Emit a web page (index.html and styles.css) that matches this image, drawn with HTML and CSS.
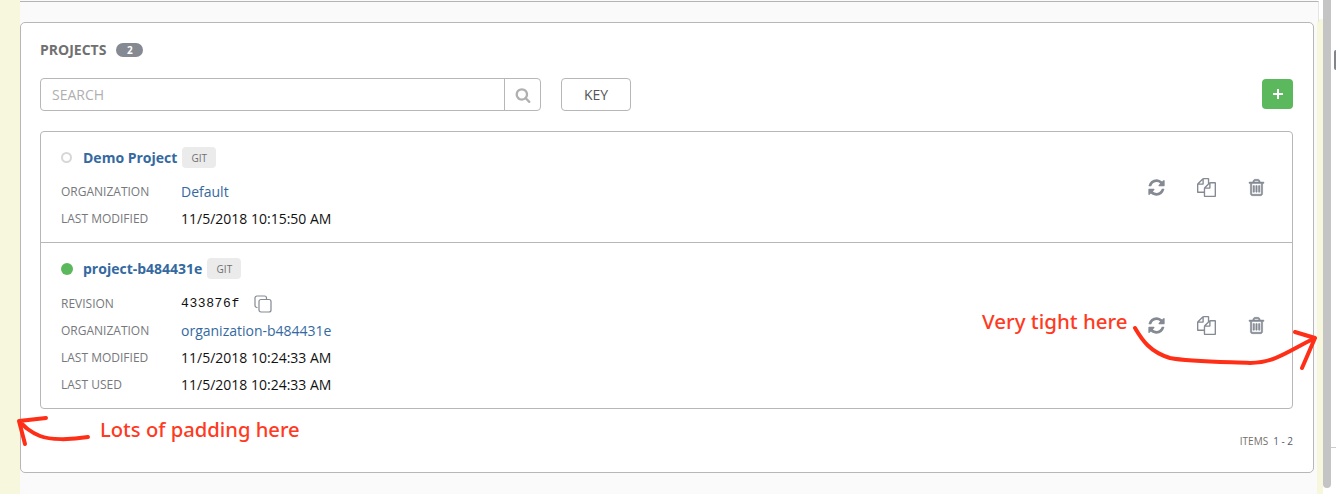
FILE: index.html
```html
<!DOCTYPE html>
<html lang="en">
<head>
<meta charset="utf-8">
<title>Projects</title>
<link rel="stylesheet" href="styles.css">
</head>
<body>
<div class="page">
  <div class="gutter"></div>
  <main class="main">
    <div class="topbar"></div>
    <section class="card">
      <header class="card-head">
        <h2 class="card-title">PROJECTS</h2>
        <span class="count">2</span>
      </header>
      <div class="toolbar">
        <div class="search">
          <span class="search-input">SEARCH</span>
          <span class="search-btn">
            <svg class="search-icon" viewBox="0 0 1792 1792"><path d="M1216 832q0-185-131.500-316.500t-316.500-131.500-316.500 131.500-131.500 316.500 131.500 316.500 316.500 131.500 316.500-131.500 131.500-316.500zm512 832q0 52-38 90t-90 38q-54 0-90-38l-343-342q-179 124-399 124-143 0-273.500-55.500t-225-150-150-225-55.500-273.500 55.500-273.500 150-225 225-150 273.500-55.500 273.500 55.500 225 150 150 225 55.500 273.500q0 220-124 399l343 343q37 37 37 90z"/></svg>
          </span>
        </div>
        <button class="key-btn">KEY</button>
        <button class="add-btn">
          <svg class="add-icon" viewBox="0 0 10 10"><path d="M4 0h2v4h4v2H6v4H4V6H0V4h4z"/></svg>
        </button>
      </div>
      <div class="list">
        <article class="row">
          <div class="row-main">
            <div class="row-title">
              <span class="dot dot-idle"></span>
              <a class="name">Demo Project</a>
              <span class="tag">GIT</span>
            </div>
            <dl class="meta">
              <div class="meta-line"><dt>ORGANIZATION</dt><dd><a class="link">Default</a></dd></div>
              <div class="meta-line"><dt>LAST MODIFIED</dt><dd>11/5/2018 10:15:50 AM</dd></div>
            </dl>
          </div>
          <div class="actions">
            <svg class="act act-sync" viewBox="0 0 1792 1792"><path d="M1639 1056q0 5-1 7-64 268-268 434.500t-478 166.500q-146 0-282.500-55t-243.500-157l-129 129q-19 19-45 19t-45-19-19-45v-448q0-26 19-45t45-19h448q26 0 45 19t19 45-19 45l-137 137q71 66 161 102t187 36q134 0 250-65t186-179q11-17 53-117 8-23 30-23h192q13 0 22.500 9.500t9.500 22.500zm25-800v448q0 26-19 45t-45 19h-448q-26 0-45-19t-19-45 19-45l138-138q-148-137-349-137-134 0-250 65t-186 179q-11 17-53 117-8 23-30 23h-199q-13 0-22.500-9.500t-9.500-22.500v-7q65-268 270-434.500t480-166.500q146 0 284 55.500t245 156.500l130-129q19-19 45-19t45 19 19 45z"/></svg>
            <svg class="act act-files" viewBox="0 0 1792 1792"><path d="M1696 384q40 0 68 28t28 68v1216q0 40-28 68t-68 28h-960q-40 0-68-28t-28-68v-288h-544q-40 0-68-28t-28-68v-672q0-40 20-88t48-76l408-408q28-28 76-48t88-20h416q40 0 68 28t28 68v328q68-40 128-40h416zm-544 213l-299 299h299v-299zm-640-384l-299 299h299v-299zm196 647l316-316v-416h-384v416q0 40-28 68t-68 28h-416v640h512v-256q0-40 20-88t48-76zm956 804v-1152h-384v416q0 40-28 68t-68 28h-416v640h896z"/></svg>
            <svg class="act act-trash" viewBox="0 0 1792 1792"><path d="M704 736v576q0 14-9 23t-23 9h-64q-14 0-23-9t-9-23v-576q0-14 9-23t23-9h64q14 0 23 9t9 23zm256 0v576q0 14-9 23t-23 9h-64q-14 0-23-9t-9-23v-576q0-14 9-23t23-9h64q14 0 23 9t9 23zm256 0v576q0 14-9 23t-23 9h-64q-14 0-23-9t-9-23v-576q0-14 9-23t23-9h64q14 0 23 9t9 23zm128 724v-948h-896v948q0 22 7 40.500t14.500 27 10.500 8.500h832q3 0 10.500-8.500t14.500-27 7-40.500zm-672-1076h448l-48-117q-7-9-17-11h-317q-10 2-17 11zm928 32v64q0 14-9 23t-23 9h-96v948q0 83-47 143.500t-113 60.500h-832q-66 0-113-58.500t-47-141.500v-952h-96q-14 0-23-9t-9-23v-64q0-14 9-23t23-9h309l70-167q15-37 54-63t79-26h320q40 0 79 26t54 63l70 167h309q14 0 23 9t9 23z"/></svg>
          </div>
        </article>
        <article class="row">
          <div class="row-main">
            <div class="row-title">
              <span class="dot dot-ok"></span>
              <a class="name">project-b484431e</a>
              <span class="tag">GIT</span>
            </div>
            <dl class="meta">
              <div class="meta-line"><dt>REVISION</dt><dd class="rev"><span class="hash">433876f</span>
                <svg class="copy" viewBox="0 0 18 18"><path d="M3.500 12.500h-.5a2 2 0 0 1-2-2V3a2 2 0 0 1 2-2h7.500a2 2 0 0 1 2 2v1"/><rect x="5" y="4.500" width="12" height="12.500" rx="2"/></svg>
              </dd></div>
              <div class="meta-line"><dt>ORGANIZATION</dt><dd><a class="link">organization-b484431e</a></dd></div>
              <div class="meta-line"><dt>LAST MODIFIED</dt><dd>11/5/2018 10:24:33 AM</dd></div>
              <div class="meta-line"><dt>LAST USED</dt><dd>11/5/2018 10:24:33 AM</dd></div>
            </dl>
          </div>
          <div class="actions">
            <svg class="act act-sync" viewBox="0 0 1792 1792"><path d="M1639 1056q0 5-1 7-64 268-268 434.500t-478 166.500q-146 0-282.500-55t-243.500-157l-129 129q-19 19-45 19t-45-19-19-45v-448q0-26 19-45t45-19h448q26 0 45 19t19 45-19 45l-137 137q71 66 161 102t187 36q134 0 250-65t186-179q11-17 53-117 8-23 30-23h192q13 0 22.500 9.500t9.500 22.500zm25-800v448q0 26-19 45t-45 19h-448q-26 0-45-19t-19-45 19-45l138-138q-148-137-349-137-134 0-250 65t-186 179q-11 17-53 117-8 23-30 23h-199q-13 0-22.500-9.500t-9.500-22.500v-7q65-268 270-434.500t480-166.500q146 0 284 55.500t245 156.500l130-129q19-19 45-19t45 19 19 45z"/></svg>
            <svg class="act act-files" viewBox="0 0 1792 1792"><path d="M1696 384q40 0 68 28t28 68v1216q0 40-28 68t-68 28h-960q-40 0-68-28t-28-68v-288h-544q-40 0-68-28t-28-68v-672q0-40 20-88t48-76l408-408q28-28 76-48t88-20h416q40 0 68 28t28 68v328q68-40 128-40h416zm-544 213l-299 299h299v-299zm-640-384l-299 299h299v-299zm196 647l316-316v-416h-384v416q0 40-28 68t-68 28h-416v640h512v-256q0-40 20-88t48-76zm956 804v-1152h-384v416q0 40-28 68t-68 28h-416v640h896z"/></svg>
            <svg class="act act-trash" viewBox="0 0 1792 1792"><path d="M704 736v576q0 14-9 23t-23 9h-64q-14 0-23-9t-9-23v-576q0-14 9-23t23-9h64q14 0 23 9t9 23zm256 0v576q0 14-9 23t-23 9h-64q-14 0-23-9t-9-23v-576q0-14 9-23t23-9h64q14 0 23 9t9 23zm256 0v576q0 14-9 23t-23 9h-64q-14 0-23-9t-9-23v-576q0-14 9-23t23-9h64q14 0 23 9t9 23zm128 724v-948h-896v948q0 22 7 40.500t14.500 27 10.500 8.500h832q3 0 10.500-8.500t14.500-27 7-40.500zm-672-1076h448l-48-117q-7-9-17-11h-317q-10 2-17 11zm928 32v64q0 14-9 23t-23 9h-96v948q0 83-47 143.500t-113 60.500h-832q-66 0-113-58.500t-47-141.500v-952h-96q-14 0-23-9t-9-23v-64q0-14 9-23t23-9h309l70-167q15-37 54-63t79-26h320q40 0 79 26t54 63l70 167h309q14 0 23 9t9 23z"/></svg>
          </div>
        </article>
      </div>
      <footer class="card-foot"><span class="items-label">ITEMS</span><span class="items-range">1 - 2</span></footer>
    </section>
  </main>
  <aside class="rail">
    <div class="rail-yellow"></div>
    <div class="rail-track"></div>
    <div class="rail-edge"><span class="edge-mark"></span><span class="edge-line"></span></div>
  </aside>
  <span class="note note-tight">Very tight here</span>
  <span class="note note-padding">Lots of padding here</span>
  <svg class="scribble scribble-left" viewBox="0 0 100 40"><path d="M88 27C70 30 50 30 40 26 30 22 25 17 19 11M46 8 19 11 25 34"/></svg>
  <svg class="scribble scribble-right" viewBox="0 0 200 60"><path d="M5 8C12 20 20 32 40 38 60 42 100 42 120 43 145 43 160 30 185 18M165 12 185 18 172 48"/></svg>
</div>
</body>
</html>
```
FILE: styles.css
```css
* { box-sizing: border-box; }
html, body { margin: 0; padding: 0; }
body { font-family: "Open Sans", "Noto Sans", sans-serif; background: #fff; color: #161b1f; overflow: hidden; }
.page { position: relative; display: flex; width: 1336px; height: 494px; overflow: hidden; background: #fff; }
.gutter { flex: 0 0 20px; background: #f6f7dc; }
.main { flex: 0 0 1297px; background: #fafafa; display: flex; flex-direction: column; align-items: flex-start; }
.topbar { width: 1299px; height: 21px; flex: none; margin-top: 1px; margin-right: -2px; border-top: 1px solid #b4b4b4; border-right: 1px solid #e4e4e4; background: #fafafa; position: relative; z-index: 1; }
.card { width: 1294px; height: 451px; flex: none; background: #fff; border: 1px solid #b7b7b7; border-radius: 5px; padding: 0 20px 0 19px; display: flex; flex-direction: column; position: relative; z-index: 2; }
.card-head { height: 55px; padding-bottom: 2px; display: flex; align-items: center; gap: 10px; flex: none; }
.card-title { margin: 0; font-size: 14px; font-weight: 700; color: #707070; line-height: 1; }
.count { width: 27px; height: 14px; border-radius: 7px; background: #848992; color: #fff; font-size: 10px; font-weight: 700; display: flex; align-items: center; justify-content: center; }
.toolbar { display: flex; align-items: flex-start; height: 33px; flex: none; }
.search { width: 501px; height: 33px; display: flex; border: 1px solid #b7b7b7; border-radius: 4px; }
.search-input { flex: 1; padding-left: 11px; display: flex; align-items: center; font-size: 14px; color: #b0b0b0; }
.search-btn { width: 36px; border-left: 1px solid #b7b7b7; display: flex; align-items: center; justify-content: center; }
.search-icon { width: 16px; height: 16px; fill: #b0b0b0; }
.key-btn { margin-left: 20px; width: 70px; height: 33px; border: 1px solid #b7b7b7; border-radius: 4px; background: #fff; color: #555; font: 400 14px "Open Sans", sans-serif; padding: 0; }
.add-btn { margin-left: auto; margin-top: 1px; width: 31px; height: 30px; border: 0; border-radius: 4px; background: #5cb85c; padding: 0; display: flex; align-items: center; justify-content: center; }
.add-icon { width: 10px; height: 10px; fill: #fff; }
.list { margin-top: 20px; height: 278px; flex: none; border: 1px solid #b7b7b7; border-radius: 4px; display: flex; flex-direction: column; }
.row { display: flex; justify-content: space-between; align-items: center; padding-left: 20px; padding-right: 26px; }
.row:first-child { height: 111px; border-bottom: 1px solid #b7b7b7; }
.row:last-child { flex: 1; }
.row:last-child .meta { margin-top: 11px; }
.row-main { align-self: flex-start; padding-top: 15px; }
.row-title { height: 21px; display: flex; align-items: center; }
.dot { width: 11px; height: 11px; border-radius: 50%; margin-right: 11px; flex: none; }
.dot-idle { border: 2px solid #d7d7d7; background: #fff; }
.dot-ok { background: #5cb85c; width: 12px; height: 12px; margin-right: 10px; }
.name { font-size: 14px; font-weight: 700; color: #34699f; }
.tag { margin-left: 5px; width: 34px; height: 21px; border-radius: 4px; background: #ebebeb; color: #707070; font-size: 10px; display: flex; align-items: center; justify-content: center; }
.meta { margin: 10px 0 0; }
.meta-line { height: 27px; display: flex; align-items: center; }
.meta-line dt { width: 120px; font-size: 12px; color: #76787c; flex: none; }
.meta-line dd { margin: 0; font-size: 14px; color: #111; display: flex; align-items: center; }
.link { color: #34699f; }
.hash { font-family: "Liberation Mono", monospace; font-size: 13px; letter-spacing: 0.6px; }
.rev { gap: 14px; }
.copy { width: 18px; height: 18px; fill: none; stroke: #848992; stroke-width: 1.200; }
.actions { display: flex; align-items: center; gap: 31px; }
.act { width: 19px; height: 19px; fill: #848992; display: block; }
.act-trash { stroke: #848992; stroke-width: 50; }
.card-foot { display: flex; justify-content: flex-end; align-items: center; height: 64px; font-size: 10px; color: #75706a; }
.items-label { margin-right: 5px; }
.items-range { color: #555b6b; }
.rail { flex: 0 0 19px; display: flex; background: #fff; }
.rail-yellow { width: 6px; background: #f6f7dc; margin-top: 19px; }
.rail-track { width: 8px; height: 488px; background: #c4c4c4; border-radius: 0 0 4px 4px; }
.rail-edge { flex: 1; position: relative; }
.edge-mark { position: absolute; right: 0; top: 50px; width: 2px; height: 20px; border-radius: 2px 0 0 2px; background: #80858c; }
.edge-line { position: absolute; left: 0; right: 0; top: 447px; height: 1px; background: #ccc; }
.note { position: absolute; z-index: 5; color: #ff3a22; font-family: "Noto Sans", sans-serif; font-weight: 500; line-height: 1; white-space: nowrap; }
.note-tight { left: 982px; top: 311px; font-size: 20.500px; }
.note-padding { left: 100px; top: 419px; font-size: 20.200px; }
.scribble { position: absolute; z-index: 5; fill: none; stroke: #ff2f17; stroke-width: 4; stroke-linecap: round; stroke-linejoin: round; overflow: visible; }
.scribble-left { left: 0; top: 410px; width: 100px; height: 40px; }
.scribble-right { left: 1130px; top: 320px; width: 200px; height: 60px; }
```
